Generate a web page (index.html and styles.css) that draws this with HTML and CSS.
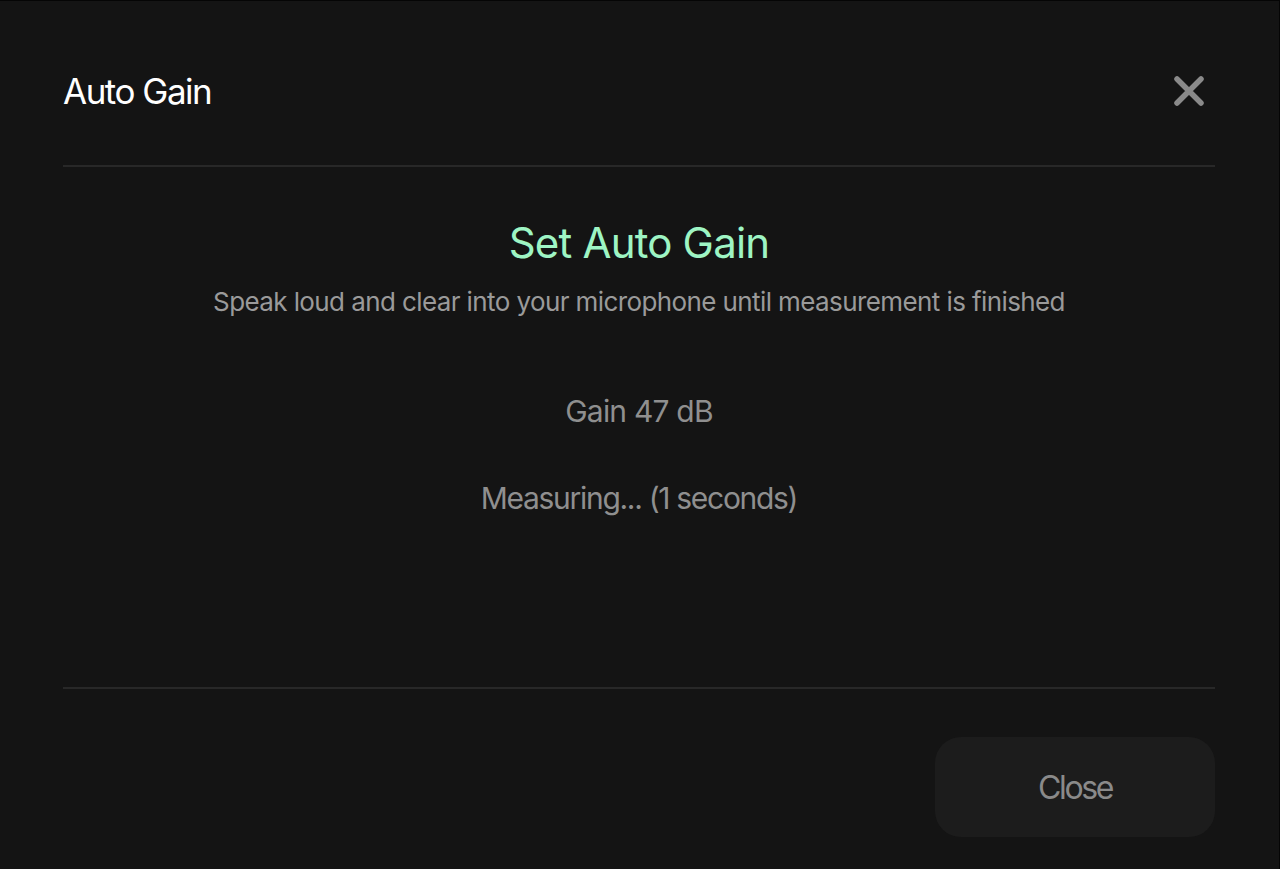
FILE: index.html
```html
<!DOCTYPE html>
<html lang="en">
<head>
<meta charset="utf-8">
<title>Auto Gain</title>
<link rel="stylesheet" href="styles.css">
</head>
<body>
<div class="modal">
  <div class="header">
    <h1 class="title">Auto Gain</h1>
    <button class="close-icon" aria-label="Close">
      <svg width="32" height="32" viewBox="0 0 32 32"><path d="M4 4 L28 28 M28 4 L4 28" stroke="#8a8a8a" stroke-width="5.5" stroke-linecap="round" fill="none"/></svg>
    </button>
  </div>
  <div class="divider"></div>
  <div class="body">
    <h2 class="heading">Set Auto Gain</h2>
    <p class="sub">Speak loud and clear into your microphone until measurement is finished</p>
    <p class="stat gain">Gain 47 dB</p>
    <p class="stat measuring">Measuring... (1 seconds)</p>
  </div>
  <div class="divider"></div>
  <div class="footer">
    <button class="close-btn">Close</button>
  </div>
</div>
</body>
</html>
```
FILE: styles.css
```css
html, body {
  margin: 0;
  padding: 0;
  background: #141414;
}
body {
  font-family: Inter, "Noto Sans", sans-serif;
}
.modal {
  width: 1280px;
  height: 869px;
  box-sizing: border-box;
  border-top: 1px solid #050505;
  border-right: 1px solid #050505;
  padding: 0 64px 0 63px;
  display: flex;
  flex-direction: column;
  background: #141414;
}
.header {
  height: 164px;
  box-sizing: border-box;
  padding-top: 16px;
  display: flex;
  align-items: center;
  justify-content: space-between;
}
.title {
  margin: 0;
  font-size: 35px;
  font-weight: 400;
  color: #ffffff;
  letter-spacing: -1.5px;
}
.close-icon {
  background: none;
  border: none;
  padding: 0;
  margin-right: 10px;
  width: 32px;
  height: 32px;
  display: flex;
}
.divider {
  height: 2px;
  background: #282828;
}
.body {
  flex: 1;
  display: flex;
  flex-direction: column;
  align-items: center;
  text-align: center;
}
.heading {
  margin: 50px 0 0;
  font-size: 42px;
  line-height: 52px;
  font-weight: 400;
  color: #9ef5c4;
  letter-spacing: -0.8px;
}
.sub {
  margin: 16px 0 0;
  font-size: 26px;
  line-height: 34px;
  color: #9a9a9a;
  letter-spacing: -0.6px;
}
.stat {
  font-size: 30px;
  line-height: 40px;
  color: #8f8f8f;
  letter-spacing: -0.8px;
  font-weight: 400;
}
.gain {
  margin: 72px 0 0;
}
.measuring {
  margin: 47px 0 0;
  letter-spacing: -1.3px;
}
.footer {
  display: flex;
  justify-content: flex-end;
  padding: 48px 0 32px;
}
.close-btn {
  width: 280px;
  height: 100px;
  border: none;
  border-radius: 26px;
  background: #1c1c1c;
  color: #8a8a8a;
  font-family: Inter, "Noto Sans", sans-serif;
  font-size: 32px;
  font-weight: 400;
  letter-spacing: -2.4px;
}
```
